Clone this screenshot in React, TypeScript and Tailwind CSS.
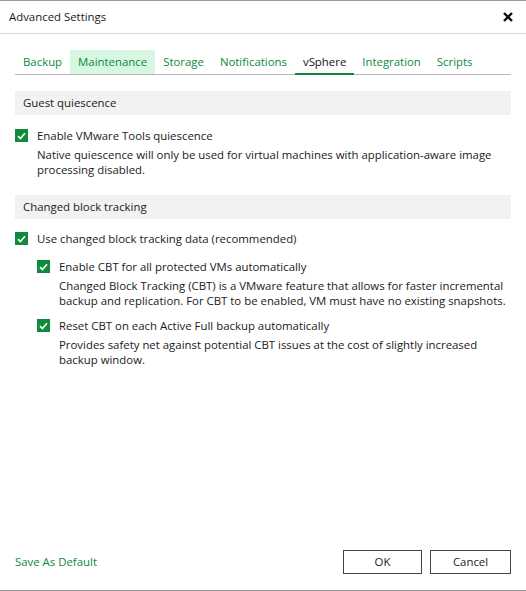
import React from "react";

const font = { fontFamily: '"Open Sans", "Noto Sans", sans-serif' };

function Check() {
  return (
    <span className="flex h-[13px] w-[13px] shrink-0 items-center justify-center bg-[#108a3c]">
      <svg width="9" height="8" viewBox="0 0 9 8" fill="none">
        <path d="M1 4.2 L3.4 6.5 L8 1.3" stroke="white" strokeWidth="1.7" />
      </svg>
    </span>
  );
}

function CheckRow({ label, children, indent, extra }: { label: string; children?: React.ReactNode; indent?: boolean; extra?: string }) {
  return (
    <div className={(indent ? "pl-[22px] " : "") + (extra || "")}>
      <div className="flex h-[15px] items-center gap-[9px]">
        <Check />
        <span className="whitespace-nowrap text-[11.4px] text-[#1a1a1a]">{label}</span>
      </div>
      {children ? (
        <div className="mt-[4px] whitespace-nowrap pl-[22px] text-[11.4px] leading-[15px] text-[#1a1a1a]">{children}</div>
      ) : null}
    </div>
  );
}

const tabs = ["Backup", "Maintenance", "Storage", "Notifications", "vSphere", "Integration", "Scripts"];

export default function App() {
  return (
    <div style={font} className="flex h-[591px] w-[526px] flex-col border-y border-[#9a9a9a] bg-white text-[#1a1a1a]">
      <div className="flex h-[33px] items-center justify-between border-b border-[#d6d6d6] pl-[9px] pr-[13px]">
        <span className="text-[11.4px]">Advanced Settings</span>
        <svg width="10" height="10" viewBox="0 0 10 10">
          <path d="M1 1 L9 9 M9 1 L1 9" stroke="#111" strokeWidth="2.4" />
        </svg>
      </div>
      <div className="mx-[15px] mt-[16px] flex h-[25px] border-b border-[#b8b8b8]">
        {tabs.map((t) => {
          const active = t === "vSphere";
          const hl = t === "Maintenance";
          return (
            <div
              key={t}
              className={
                "relative flex h-[24px] items-center whitespace-nowrap px-[8px] text-[11.4px] " +
                (active ? "text-[#111] " : "text-[#0b8a3c] ") +
                (hl ? "bg-[#d8f7e2]" : "")
              }
            >
              {t}
              {active ? <span className="absolute bottom-[-1px] left-0 right-0 h-[2px] bg-[#0b8a3c]" /> : null}
            </div>
          );
        })}
      </div>
      <div className="mx-[15px] mt-[16px] flex h-[24px] items-center bg-[#f2f2f2] pl-[8px] text-[11.4px]">
        Guest quiescence
      </div>
      <div className="mt-[13px] pl-[15px] pr-[15px]">
        <CheckRow label="Enable VMware Tools quiescence">
          Native quiescence will only be used for virtual machines with application-aware image
          <br />
          processing disabled.
        </CheckRow>
      </div>
      <div className="mx-[15px] mt-[18px] flex h-[24px] items-center bg-[#f2f2f2] pl-[8px] text-[11.4px]">
        Changed block tracking
      </div>
      <div className="mt-[12px] flex flex-col pl-[15px] pr-[15px]">
        <CheckRow label="Use changed block tracking data (recommended)" />
        <CheckRow indent extra="mt-[13px]" label="Enable CBT for all protected VMs automatically">
          Changed Block Tracking (CBT) is a VMware feature that allows for faster incremental
          <br />
          backup and replication. For CBT to be enabled, VM must have no existing snapshots.
        </CheckRow>
        <CheckRow indent extra="mt-[10px]" label="Reset CBT on each Active Full backup automatically">
          Provides safety net against potential CBT issues at the cost of slightly increased
          <br />
          backup window.
        </CheckRow>
      </div>
      <div className="flex-1" />
      <div className="mb-[16px] flex items-center justify-between px-[15px]">
        <span className="text-[11.4px] text-[#0b8a3c]">Save As Default</span>
        <div className="flex gap-[8px]">
          <button className="h-[24px] w-[79px] border border-[#444] bg-white text-[11.4px]">OK</button>
          <button className="h-[24px] w-[81px] border border-[#444] bg-white text-[11.4px]">Cancel</button>
        </div>
      </div>
    </div>
  );
}
